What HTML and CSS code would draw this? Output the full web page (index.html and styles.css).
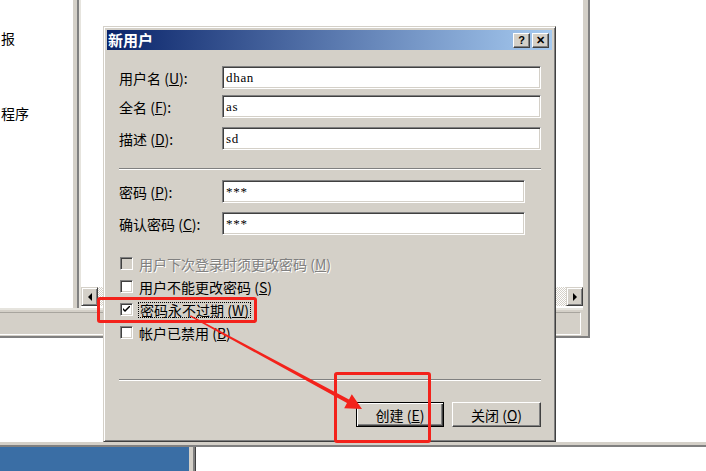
FILE: index.html
```html
<!DOCTYPE html>
<html lang="zh-CN">
<head>
    <meta charset="UTF-8">
    <title>新用户</title>
    <link rel="stylesheet" href="styles.css">
</head>
<body>
<div class="screen">
    <!-- console window behind the dialog -->
    <div class="mmc">
        <div class="panes">
            <div class="tree">
                <div class="tree-item first">报</div>
                <div class="tree-item">程序</div>
            </div>
            <div class="splitter"></div>
            <div class="list">
                <div class="list-body"></div>
                <div class="hscroll">
                    <div class="sb-btn"><span class="tri-left"></span></div>
                    <div class="sb-track"></div>
                    <div class="sb-btn"><span class="tri-right"></span></div>
                </div>
            </div>
        </div>
        <div class="status"><div class="status-panel"></div></div>
    </div>
    <div class="desk"></div>
    <div class="bottom">
        <div class="bottom-blue"></div>
        <div class="bottom-split"></div>
        <div class="bottom-white"></div>
    </div>

    <!-- new user dialog -->
    <div class="dialog">
        <div class="titlebar">
            <span class="title">新用户</span>
            <div class="title-btns">
                <button class="tbtn">?</button>
                <button class="tbtn">✕</button>
            </div>
        </div>
        <div class="dlg-body">
            <div class="field">
                <label>用户名 (<u>U</u>):</label>
                <div class="input">dhan</div>
            </div>
            <div class="field">
                <label>全名 (<u>F</u>):</label>
                <div class="input">as</div>
            </div>
            <div class="field wide-gap">
                <label>描述 (<u>D</u>):</label>
                <div class="input">sd</div>
            </div>

            <div class="sep"></div>

            <div class="field pw-first">
                <label>密码 (<u>P</u>):</label>
                <div class="input short">***</div>
            </div>
            <div class="field wide-gap">
                <label>确认密码 (<u>C</u>):</label>
                <div class="input short">***</div>
            </div>

            <div class="checks">
                <div class="check disabled">
                    <span class="box"></span>
                    <span class="text">用户下次登录时须更改密码 (<u>M</u>)</span>
                </div>
                <div class="check">
                    <span class="box"></span>
                    <span class="text">用户不能更改密码 (<u>S</u>)</span>
                </div>
                <div class="check">
                    <span class="box">
                        <svg class="tick" width="7" height="7" viewBox="0 0 7 7"><path d="M0 2 L0 4 L2 6 L7 1 L7 -1 L2 4 Z" fill="#000"/></svg>
                    </span>
                    <span class="text focus">密码永不过期 (<u>W</u>)</span>
                </div>
                <div class="check">
                    <span class="box"></span>
                    <span class="text">帐户已禁用 (<u>B</u>)</span>
                </div>
            </div>

            <div class="sep sep-bottom"></div>

            <div class="actions">
                <button class="btn default">创建 (<u>E</u>)</button>
                <button class="btn">关闭 (<u>O</u>)</button>
            </div>
        </div>
    </div>

    <!-- red annotations -->
    <div class="mark mark-check"></div>
    <div class="mark mark-btn"></div>
    <svg class="arrow" width="706" height="471" viewBox="0 0 706 471">
        <polygon points="190,316.5 190.6,315.3 349,399.5 351.8,394.3 362,409 344.2,408.3 347,403.1" fill="#f3221b"/>
    </svg>
</div>
</body>
</html>
```

FILE: styles.css
```css
* {
    box-sizing: border-box;
}

html, body {
    margin: 0;
    padding: 0;
}

body {
    width: 706px;
    height: 471px;
    overflow: hidden;
    background: #fff;
    font-family: "Noto Sans CJK SC", "Liberation Sans", sans-serif;
    font-size: 14px;
    color: #000;
}

.screen {
    position: relative;
    width: 706px;
    height: 471px;
    display: flex;
    flex-direction: column;
}

/* background console window */
.mmc {
    width: 590px;
    height: 338px;
    display: flex;
    flex-direction: column;
    background: #d4d0c8;
    padding-right: 5px;
    border-right: 2px solid #808080;
    border-bottom: 2px solid #808080;
}

.panes {
    display: flex;
    height: 310px;
    border-bottom: 2px solid #e6e4de;
}

.tree {
    width: 73px;
    background: #fff;
}

.tree-item {
    line-height: 14px;
    padding-left: 1px;
    margin-top: 61px;
    white-space: nowrap;
}

.tree-item.first {
    margin-top: 31px;
}

.splitter {
    width: 8px;
    background: linear-gradient(to right, #d4d0c8 0 4px, #808080 4px 6px, #e6e4de 6px);
}

.list {
    flex: 1;
    display: flex;
    flex-direction: column;
    background: #fff;
}

.list-body {
    flex: 1;
}

.hscroll {
    height: 19px;
    display: flex;
    margin-bottom: 2px;
}

.sb-track {
    flex: 1;
    background: repeating-conic-gradient(#d4d0c8 0 25%, #fff 0 50%) 0 0 / 2px 2px;
}

.sb-btn {
    width: 17px;
    height: 19px;
    display: flex;
    align-items: center;
    justify-content: center;
    background: #d4d0c8;
    border: 1px solid;
    border-color: #d4d0c8 #404040 #404040 #d4d0c8;
    box-shadow: inset 1px 1px #fff, inset -1px -1px #808080;
}

.tri-left {
    border-top: 4px solid transparent;
    border-bottom: 4px solid transparent;
    border-right: 4px solid #000;
}

.tri-right {
    border-top: 4px solid transparent;
    border-bottom: 4px solid transparent;
    border-left: 4px solid #000;
}

.status {
    flex: 1;
    padding: 2px 2px 1px 0;
}

.status-panel {
    height: 100%;
    margin-left: -1px;
    border: 1px solid;
    border-color: #a8a59e #fff #fff #a8a59e;
}

.desk {
    flex: 1;
    background: #fff;
}

.bottom {
    height: 29px;
    display: flex;
    border-top: 3px solid #d4d0c8;
    padding-top: 2px;
    background: #808080;
}

.bottom-blue {
    width: 189px;
    background: #3a6ea5;
}

.bottom-split {
    width: 7px;
    background: linear-gradient(to right, #d4d0c8 0 4px, #808080 4px 6px, #404040 6px);
}

.bottom-white {
    flex: 1;
    background: #fff;
}

/* dialog */
.dialog {
    position: absolute;
    left: 103px;
    top: 26px;
    width: 453px;
    height: 416px;
    background: #d4d0c8;
    border: 1px solid;
    border-color: #d4d0c8 #404040 #404040 #d4d0c8;
    box-shadow: inset 1px 1px #fff, inset -1px -1px #808080;
    padding: 3px;
}

.titlebar {
    height: 20px;
    display: flex;
    align-items: center;
    justify-content: space-between;
    padding: 0 3px 0 1px;
    background: linear-gradient(to right, #0a246a, #a6caf0);
}

.title {
    color: #fff;
    font-weight: bold;
    font-size: 15px;
    line-height: 16px;
}

.title-btns {
    display: flex;
    gap: 2px;
}

.tbtn {
    width: 17px;
    height: 15px;
    padding: 0;
    background: #d4d0c8;
    border: 1px solid;
    border-color: #fff #404040 #404040 #fff;
    box-shadow: inset -1px -1px #808080;
    font-family: "Liberation Sans", sans-serif;
    font-weight: bold;
    font-size: 11px;
    line-height: 12px;
    color: #000;
}

.dlg-body {
    padding: 16px 11px 0 12px;
}

.field {
    display: flex;
    align-items: center;
    height: 23px;
}

.field + .field {
    margin-top: 6px;
}

.field.wide-gap {
    margin-top: 9px;
}

.field.pw-first {
    margin-top: 10px;
}

.field label {
    width: 103px;
    white-space: nowrap;
}

.input {
    width: 319px;
    height: 23px;
    background: #fff;
    border: 1px solid;
    border-color: #808080 #fff #fff #808080;
    box-shadow: inset 1px 1px #404040, inset -1px -1px #d4d0c8;
    padding: 0 3px;
    font-family: "Liberation Serif", serif;
    font-size: 13px;
    letter-spacing: 0.7px;
    line-height: 21px;
}

.input.short {
    width: 303px;
}

.sep {
    height: 2px;
    margin-top: 18px;
    border-top: 1px solid #808080;
    border-bottom: 1px solid #fff;
}

.sep-bottom {
    margin-top: 40px;
}

.checks {
    display: flex;
    flex-direction: column;
    gap: 10px;
    margin-top: 22px;
    padding-left: 1px;
}

.check {
    display: flex;
    align-items: center;
    gap: 6px;
    height: 13px;
    white-space: nowrap;
}

.box {
    width: 13px;
    height: 13px;
    display: flex;
    align-items: center;
    justify-content: center;
    background: #fff;
    border: 1px solid;
    border-color: #808080 #fff #fff #808080;
    box-shadow: inset 1px 1px #404040, inset -1px -1px #d4d0c8;
}

.check.disabled .box {
    background: #d4d0c8;
}

.check.disabled .text {
    color: #808080;
    text-shadow: 1px 1px #fff;
}

.text {
    line-height: 14px;
}

.text.focus {
    border: 1px dotted #000;
    padding: 0 1px;
    margin-left: -1px;
}

.actions {
    display: flex;
    justify-content: flex-end;
    gap: 8px;
    margin-top: 21px;
}

.btn {
    width: 89px;
    height: 25px;
    padding: 0;
    background: #d4d0c8;
    border: 1px solid;
    border-color: #fff #404040 #404040 #fff;
    box-shadow: inset -1px -1px #808080;
    font-family: "Noto Sans CJK SC", "Liberation Sans", sans-serif;
    font-size: 14px;
    color: #000;
}

.btn.default {
    width: 88px;
    border-color: #000;
    box-shadow: inset 1px 1px #fff, inset -1px -1px #404040, inset -2px -2px #808080;
}

/* annotations */
.mark {
    position: absolute;
    border: 3px solid #f3221b;
    border-radius: 3px;
}

.mark-check {
    left: 97px;
    top: 297px;
    width: 160px;
    height: 26px;
}

.mark-btn {
    left: 334px;
    top: 372px;
    width: 97px;
    height: 71px;
}

.arrow {
    position: absolute;
    left: 0;
    top: 0;
    pointer-events: none;
}
```
